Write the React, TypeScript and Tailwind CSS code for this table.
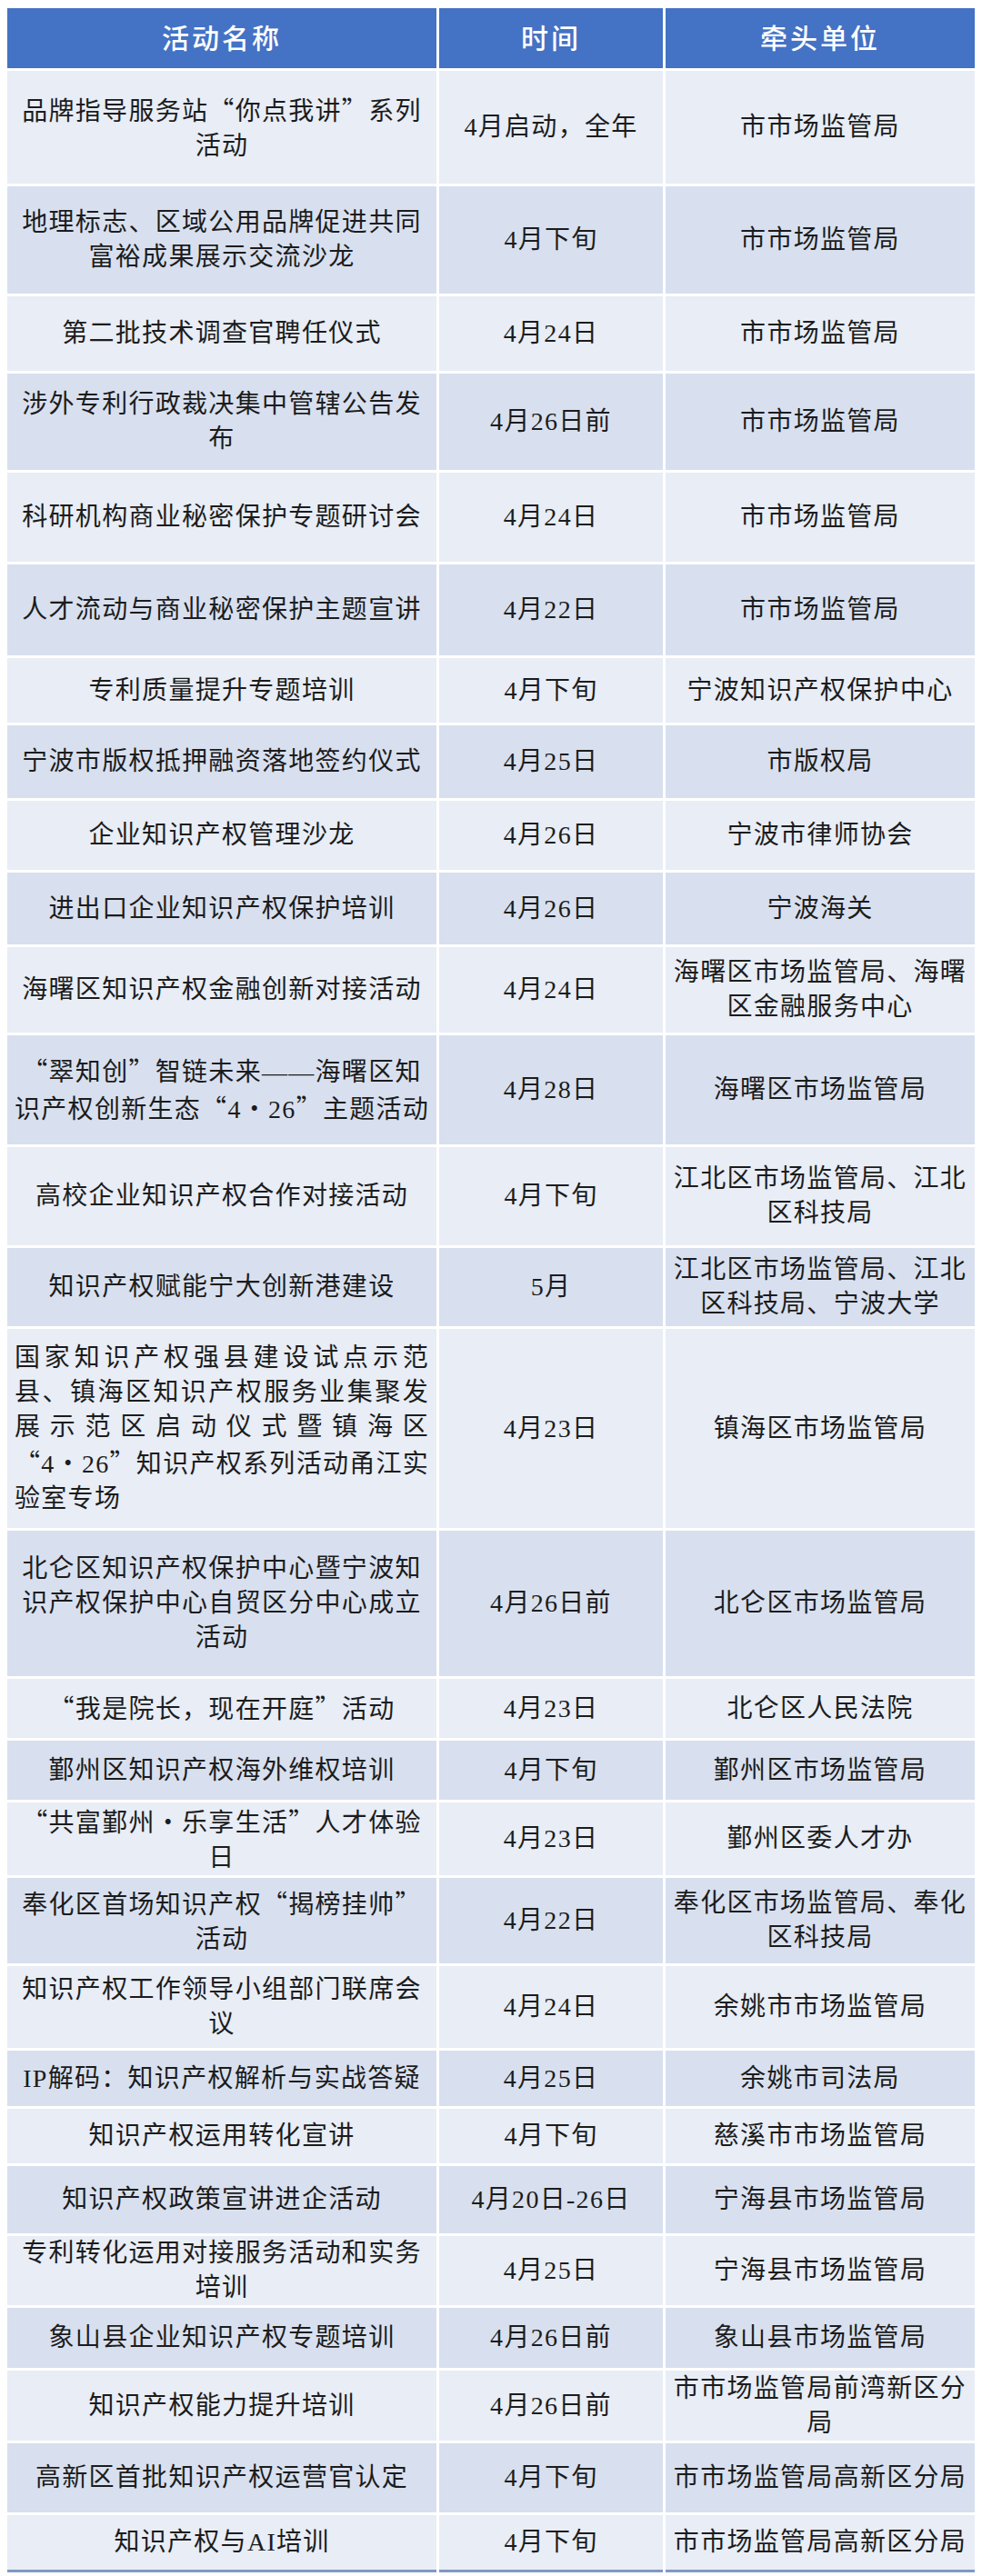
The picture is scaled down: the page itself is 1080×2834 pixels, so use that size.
import React from 'react';

type Row = {
  h: string;
  a: string[];
  t: string[];
  u: string[];
  justify?: boolean;
};

// 行高按原图量出（不含 3px 白色间隔）
const rows: Row[] = [
  { h: 'h-[124px]', a: ['品牌指导服务站“你点我讲”系列', '活动'], t: ['4月启动，全年'], u: ['市市场监管局'] },
  { h: 'h-[118px]', a: ['地理标志、区域公用品牌促进共同', '富裕成果展示交流沙龙'], t: ['4月下旬'], u: ['市市场监管局'] },
  { h: 'h-[82px]', a: ['第二批技术调查官聘任仪式'], t: ['4月24日'], u: ['市市场监管局'] },
  { h: 'h-[106px]', a: ['涉外专利行政裁决集中管辖公告发', '布'], t: ['4月26日前'], u: ['市市场监管局'] },
  { h: 'h-[98px]', a: ['科研机构商业秘密保护专题研讨会'], t: ['4月24日'], u: ['市市场监管局'] },
  { h: 'h-[100px]', a: ['人才流动与商业秘密保护主题宣讲'], t: ['4月22日'], u: ['市市场监管局'] },
  { h: 'h-[71px]', a: ['专利质量提升专题培训'], t: ['4月下旬'], u: ['宁波知识产权保护中心'] },
  { h: 'h-[80px]', a: ['宁波市版权抵押融资落地签约仪式'], t: ['4月25日'], u: ['市版权局'] },
  { h: 'h-[76px]', a: ['企业知识产权管理沙龙'], t: ['4月26日'], u: ['宁波市律师协会'] },
  { h: 'h-[79px]', a: ['进出口企业知识产权保护培训'], t: ['4月26日'], u: ['宁波海关'] },
  { h: 'h-[94px]', a: ['海曙区知识产权金融创新对接活动'], t: ['4月24日'], u: ['海曙区市场监管局、海曙', '区金融服务中心'] },
  { h: 'h-[120px]', a: ['“翠知创”智链未来——海曙区知', '识产权创新生态“4·26”主题活动'], t: ['4月28日'], u: ['海曙区市场监管局'] },
  { h: 'h-[108px]', a: ['高校企业知识产权合作对接活动'], t: ['4月下旬'], u: ['江北区市场监管局、江北', '区科技局'] },
  { h: 'h-[86px]', a: ['知识产权赋能宁大创新港建设'], t: ['5月'], u: ['江北区市场监管局、江北', '区科技局、宁波大学'] },
  {
    h: 'h-[219px]',
    a: ['国家知识产权强县建设试点示范', '县、镇海区知识产权服务业集聚发', '展示范区启动仪式暨镇海区', '“4·26”知识产权系列活动甬江实', '验室专场'],
    t: ['4月23日'],
    u: ['镇海区市场监管局'],
    justify: true,
  },
  { h: 'h-[160px]', a: ['北仑区知识产权保护中心暨宁波知', '识产权保护中心自贸区分中心成立', '活动'], t: ['4月26日前'], u: ['北仑区市场监管局'] },
  { h: 'h-[65px]', a: ['“我是院长，现在开庭”活动'], t: ['4月23日'], u: ['北仑区人民法院'] },
  { h: 'h-[65px]', a: ['鄞州区知识产权海外维权培训'], t: ['4月下旬'], u: ['鄞州区市场监管局'] },
  { h: 'h-[80px]', a: ['“共富鄞州·乐享生活”人才体验', '日'], t: ['4月23日'], u: ['鄞州区委人才办'] },
  { h: 'h-[94px]', a: ['奉化区首场知识产权“揭榜挂帅”', '活动'], t: ['4月22日'], u: ['奉化区市场监管局、奉化', '区科技局'] },
  { h: 'h-[90px]', a: ['知识产权工作领导小组部门联席会', '议'], t: ['4月24日'], u: ['余姚市市场监管局'] },
  { h: 'h-[61px]', a: ['IP解码：知识产权解析与实战答疑'], t: ['4月25日'], u: ['余姚市司法局'] },
  { h: 'h-[60px]', a: ['知识产权运用转化宣讲'], t: ['4月下旬'], u: ['慈溪市市场监管局'] },
  { h: 'h-[74px]', a: ['知识产权政策宣讲进企活动'], t: ['4月20日-26日'], u: ['宁海县市场监管局'] },
  { h: 'h-[76px]', a: ['专利转化运用对接服务活动和实务', '培训'], t: ['4月25日'], u: ['宁海县市场监管局'] },
  { h: 'h-[66px]', a: ['象山县企业知识产权专题培训'], t: ['4月26日前'], u: ['象山县市场监管局'] },
  { h: 'h-[77px]', a: ['知识产权能力提升培训'], t: ['4月26日前'], u: ['市市场监管局前湾新区分', '局'] },
  { h: 'h-[76px]', a: ['高新区首批知识产权运营官认定'], t: ['4月下旬'], u: ['市市场监管局高新区分局'] },
  { h: 'h-[63px]', a: ['知识产权与AI培训'], t: ['4月下旬'], u: ['市市场监管局高新区分局'] },
];

// 引号和间隔点用中文字体的全角字形
function Rich({ text }: { text: string }) {
  const parts = text.split(/([“”·])/);
  return (
    <>
      {parts.map((p, i) =>
        /^[“”·]$/.test(p) ? (
          <span key={i} className="font-['Noto_Sans_CJK_SC',sans-serif] [font-feature-settings:'fwid']">
            {p}
          </span>
        ) : (
          <React.Fragment key={i}>{p}</React.Fragment>
        )
      )}
    </>
  );
}

function Cell({ lines, width, bg, justify, last }: { lines: string[]; width: string; bg: string; justify?: boolean; last?: boolean }) {
  return (
    <div
      className={`${width} ${bg} ${last ? 'border-b-[3px] border-[#8299c6]' : ''} flex flex-col justify-center px-[8px] text-[28px] leading-[38px] tracking-[1.3px]`}
    >
      {lines.map((l, i) => (
        <div
          key={i}
          className={
            justify
              ? i < lines.length - 1
                ? 'text-justify [text-align-last:justify] whitespace-nowrap'
                : 'text-left whitespace-nowrap'
              : 'text-center whitespace-nowrap'
          }
        >
          <Rich text={l} />
        </div>
      ))}
    </div>
  );
}

export default function App() {
  return (
    <div className="h-[2834px] bg-white pl-[8px] pt-[9px] font-['Liberation_Serif','Noto_Sans_CJK_SC',serif] text-[#1c1c1c]">
      <div className="flex w-[1064px] flex-col gap-[3px]">
        {/* 表头 */}
        <div className="flex h-[66px] gap-[3px] text-[30px] font-medium tracking-[3px] text-white">
          <div className="flex w-[472px] items-center justify-center bg-[#4472c4]">活动名称</div>
          <div className="flex w-[246px] items-center justify-center bg-[#4472c4]">时间</div>
          <div className="flex w-[340px] items-center justify-center bg-[#4472c4]">牵头单位</div>
        </div>

        {rows.map((r, i) => {
          const bg = i % 2 === 0 ? 'bg-[#e8edf6]' : 'bg-[#d8e0ef]';
          const last = i === rows.length - 1;
          return (
            <div key={i} className={`flex gap-[3px] ${r.h}`}>
              <Cell lines={r.a} width="w-[472px]" bg={bg} justify={r.justify} last={last} />
              <Cell lines={r.t} width="w-[246px]" bg={bg} last={last} />
              <Cell lines={r.u} width="w-[340px]" bg={bg} last={last} />
            </div>
          );
        })}
      </div>
    </div>
  );
}
